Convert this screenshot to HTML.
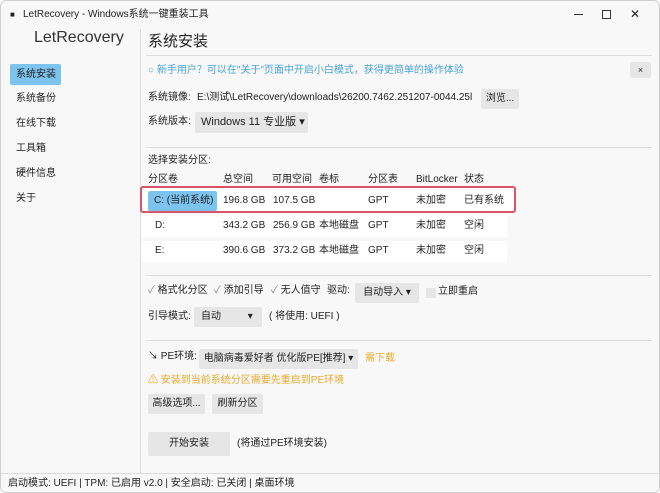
<!DOCTYPE html>
<html><head><meta charset="utf-8"><style>
*{margin:0;padding:0;box-sizing:border-box}
body{width:660px;height:493px;background:#fff;font-family:"Liberation Sans","Noto Sans CJK SC",sans-serif;font-size:10px;color:#222;position:relative;overflow:hidden}
#win{position:absolute;left:0;top:0;width:660px;height:493px;background:#f8f8f8;border:1px solid #cfcfcf;border-radius:6px;overflow:hidden}
.a{position:absolute;white-space:nowrap;line-height:14px}
.btn{position:absolute;background:#e6e6e6;border-radius:2px;text-align:center;white-space:nowrap}
.sep{position:absolute;height:1px;background:#dcdcdc}
.blue{color:#4aa3d8}
.or{color:#e8a92a}
</style></head><body><div id="win">
<div class="a" style="left:9px;top:7px;font-size:8px">■</div>
<div class="a" style="left:22px;top:7px;font-size:10px">LetRecovery - Windows系统一键重装工具</div>
<div class="a" style="left:573px;top:13px;width:9px;height:1px;background:#333"></div>
<div class="a" style="left:601px;top:9px;width:9px;height:9px;border:1px solid #333"></div>
<div class="a" style="left:629px;top:6px;font-size:12px">✕</div>

<div class="a" style="left:33px;top:27px;font-size:16px;line-height:20px;color:#333">LetRecovery</div>
<div style="position:absolute;left:139px;top:28px;width:1px;height:444px;background:#dcdcdc"></div>
<div class="a" style="left:9px;top:63px;width:51px;height:21px;background:#7cc3ee;border-radius:2px"></div>
<div class="a" style="left:15px;top:67px">系统安装</div>
<div class="a" style="left:15px;top:91px">系统备份</div>
<div class="a" style="left:15px;top:116px">在线下载</div>
<div class="a" style="left:15px;top:141px">工具箱</div>
<div class="a" style="left:15px;top:166px">硬件信息</div>
<div class="a" style="left:15px;top:191px">关于</div>

<div class="a" style="left:147px;top:31px;font-size:15px;line-height:20px">系统安装</div>
<div class="sep" style="left:145px;top:54px;width:506px"></div>
<div class="a blue" style="left:147px;top:63px">○ 新手用户？可以在"关于"页面中开启小白模式，获得更简单的操作体验</div>
<div class="btn" style="left:629px;top:61px;width:21px;height:16px;line-height:16px;font-size:9px">×</div>
<div class="a" style="left:147px;top:90px">系统镜像:</div>
<div class="a" style="left:196px;top:90px;width:278px;overflow:hidden">E:\测试\LetRecovery\downloads\26200.7462.251207-0044.25l</div>
<div class="btn" style="left:480px;top:88px;width:38px;height:20px;line-height:20px">浏览...</div>
<div class="a" style="left:147px;top:114px">系统版本:</div>
<div class="btn" style="left:194px;top:111px;width:113px;height:21px;line-height:21px;text-align:left;padding-left:6px;font-size:11px">Windows 11 专业版 ▾</div>
<div class="sep" style="left:145px;top:146px;width:506px"></div>

<div class="a" style="left:147px;top:153px">选择安装分区:</div>
<div class="a" style="left:147px;top:172px">分区卷</div><div class="a" style="left:222px;top:172px">总空间</div><div class="a" style="left:271px;top:172px">可用空间</div><div class="a" style="left:318px;top:172px">卷标</div><div class="a" style="left:367px;top:172px">分区表</div><div class="a" style="left:415px;top:172px">BitLocker</div><div class="a" style="left:463px;top:172px">状态</div>
<div style="position:absolute;left:140px;top:215px;width:366px;height:21px;background:#fff"></div>
<div style="position:absolute;left:140px;top:240px;width:366px;height:21px;background:#fff"></div>
<div style="position:absolute;left:139px;top:185px;width:376px;height:27px;border:2px solid #d9546a;border-radius:3px;background:#fff"></div>
<div class="a" style="left:147px;top:190px;width:69px;height:20px;background:#7cc3ee;border-radius:2px"></div>
<div class="a" style="left:153px;top:193px">C: (当前系统)</div><div class="a" style="left:222px;top:193px">196.8 GB</div><div class="a" style="left:272px;top:193px">107.5 GB</div><div class="a" style="left:367px;top:193px">GPT</div><div class="a" style="left:415px;top:193px">未加密</div><div class="a" style="left:463px;top:193px">已有系统</div>
<div class="a" style="left:154px;top:218px">D:</div><div class="a" style="left:222px;top:218px">343.2 GB</div><div class="a" style="left:272px;top:218px">256.9 GB</div><div class="a" style="left:318px;top:218px">本地磁盘</div><div class="a" style="left:367px;top:218px">GPT</div><div class="a" style="left:415px;top:218px">未加密</div><div class="a" style="left:463px;top:218px">空闲</div>
<div class="a" style="left:154px;top:243px">E:</div><div class="a" style="left:222px;top:243px">390.6 GB</div><div class="a" style="left:272px;top:243px">373.2 GB</div><div class="a" style="left:318px;top:243px">本地磁盘</div><div class="a" style="left:367px;top:243px">GPT</div><div class="a" style="left:415px;top:243px">未加密</div><div class="a" style="left:463px;top:243px">空闲</div>
<div class="sep" style="left:145px;top:274px;width:506px"></div>

<div class="a" style="left:147px;top:283px"><span style="color:#888">✓</span> 格式化分区</div>
<div class="a" style="left:213px;top:283px"><span style="color:#888">✓</span> 添加引导</div>
<div class="a" style="left:270px;top:283px"><span style="color:#888">✓</span> 无人值守</div>
<div class="a" style="left:326px;top:283px">驱动:</div>
<div class="btn" style="left:354px;top:282px;width:64px;height:20px;line-height:20px">自动导入 ▾</div>
<div class="a" style="left:425px;top:287px;width:10px;height:10px;background:#e6e6e6"></div>
<div class="a" style="left:437px;top:284px">立即重启</div>
<div class="a" style="left:147px;top:309px">引导模式:</div>
<div class="btn" style="left:193px;top:306px;width:68px;height:20px;line-height:20px;text-align:left;padding-left:7px">自动 <span style="margin-left:24px">▾</span></div>
<div class="a" style="left:268px;top:309px">( 将使用: UEFI )</div>
<div class="sep" style="left:145px;top:339px;width:506px"></div>

<div class="a" style="left:147px;top:349px">↘ PE环境:</div>
<div class="btn" style="left:198px;top:348px;width:159px;height:20px;line-height:20px">电脑病毒爱好者 优化版PE[推荐] ▾</div>
<div class="a or" style="left:364px;top:351px">需下载</div>
<div class="a or" style="left:147px;top:373px">⚠ 安装到当前系统分区需要先重启到PE环境</div>
<div class="btn" style="left:147px;top:393px;width:57px;height:20px;line-height:20px">高级选项...</div>
<div class="btn" style="left:211px;top:393px;width:51px;height:20px;line-height:20px">刷新分区</div>
<div class="btn" style="left:147px;top:431px;width:82px;height:24px;line-height:24px">开始安装</div>
<div class="a" style="left:236px;top:436px">(将通过PE环境安装)</div>

<div style="position:absolute;left:0;top:472px;width:660px;height:21px;border-top:1px solid #dcdcdc;background:#f8f8f8"></div>
<div class="a" style="left:7px;top:476px">启动模式: UEFI | TPM: 已启用 v2.0 | 安全启动: 已关闭 | 桌面环境</div>
</div></body></html>
